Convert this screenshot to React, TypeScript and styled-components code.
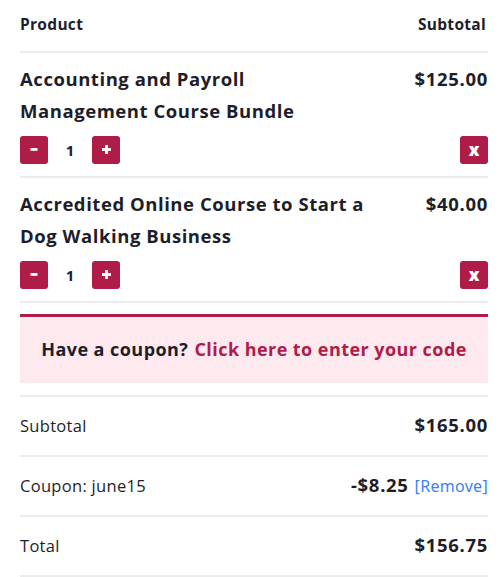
import React from "react";
import styled, { createGlobalStyle } from "styled-components";

const Global = createGlobalStyle`
  html, body { margin: 0; padding: 0; background: #fff; }
  body { font-family: "Open Sans", "Noto Sans", sans-serif; color: #1e1e2a; }
  * { box-sizing: border-box; }
`;

const CRIMSON = "#b01c48";
const LINE = "#ececec";

const Page = styled.div`
  padding: 0 12px 0 20px;
  width: 500px;
`;

const HeaderRow = styled.div`
  display: flex;
  justify-content: space-between;
  align-items: center;
  height: 53px;
  padding: 2px 2px 6px 0;
  font-size: 15.5px;
  font-weight: 700;
  letter-spacing: 0.3px;
  border-bottom: 2px solid ${LINE};
`;

const Item = styled.div`
  display: grid;
  grid-template-columns: 358px 1fr;
  padding: 10px 0 12px;
  border-bottom: 2px solid ${LINE};
`;

const Title = styled.div`
  font-size: 18.5px;
  font-weight: 700;
  line-height: 32px;
  letter-spacing: 0.55px;
`;

const Price = styled.div`
  font-family: "Noto Sans", "Open Sans", sans-serif;
  font-size: 18.5px;
  font-weight: 700;
  line-height: 32px;
  letter-spacing: 0.7px;
  text-align: right;
`;

const Controls = styled.div`
  display: flex;
  align-items: center;
  margin-top: 9px;
`;

const SqButton = styled.button`
  width: 28px;
  height: 28px;
  border: 0;
  border-radius: 3px;
  background: ${CRIMSON};
  color: #fff;
  font-family: "Open Sans", sans-serif;
  font-weight: 800;
  font-size: 17px;
  padding: 0 0 2px;
  display: flex;
  align-items: center;
  justify-content: center;
`;

const Qty = styled.span`
  width: 44px;
  text-align: center;
  font-size: 15px;
  font-weight: 700;
`;

const RemoveCell = styled.div`
  display: flex;
  align-items: flex-end;
  justify-content: flex-end;
`;

const Coupon = styled.div`
  margin: 11px 0 12px;
  border-top: 3px solid ${CRIMSON};
  background: #fde9ee;
  height: 69px;
  display: flex;
  align-items: center;
  justify-content: center;
  font-size: 18px;
  font-weight: 700;
  letter-spacing: 0.45px;
  padding-bottom: 2px;
`;

const CouponLink = styled.a`
  color: ${CRIMSON};
  text-decoration: none;
  margin-left: 6px;
`;

const Totals = styled.div`
  border-top: 2px solid ${LINE};
`;

const TotalRow = styled.div`
  display: flex;
  justify-content: space-between;
  align-items: center;
  height: 60px;
  border-bottom: 2px solid ${LINE};
  padding-bottom: 2px;
`;

const Label = styled.span`
  font-size: 16.5px;
  letter-spacing: 0.3px;
`;

const Amount = styled.span`
  display: flex;
  align-items: baseline;
`;

const RemoveLink = styled.a`
  font-family: "Noto Sans", "Open Sans", sans-serif;
  font-weight: 400;
  font-size: 16px;
  letter-spacing: 0.3px;
  color: #3b82f6;
  margin-left: 6px;
  text-decoration: none;
`;

const Minus = () => (
  <svg width="10" height="10" viewBox="0 0 10 10"><rect x="1.5" y="4" width="7" height="2.8" fill="#fff" /></svg>
);
const Plus = () => (
  <svg width="11" height="11" viewBox="0 0 11 11"><rect x="1" y="4.1" width="9" height="2.8" fill="#fff" /><rect x="4.1" y="1" width="2.8" height="9" fill="#fff" /></svg>
);

const items = [
  { title: "Accounting and Payroll Management Course Bundle", price: "$125.00" },
  { title: "Accredited Online Course to Start a Dog Walking Business", price: "$40.00" },
];

export default function App() {
  return (
    <Page>
      <Global />
      <HeaderRow>
        <span>Product</span>
        <span>Subtotal</span>
      </HeaderRow>
      {items.map((it) => (
        <Item key={it.title}>
          <Title>{it.title}</Title>
          <Price>{it.price}</Price>
          <Controls>
            <SqButton aria-label="decrease"><Minus /></SqButton>
            <Qty>1</Qty>
            <SqButton aria-label="increase"><Plus /></SqButton>
          </Controls>
          <RemoveCell>
            <SqButton aria-label="remove">x</SqButton>
          </RemoveCell>
        </Item>
      ))}
      <Coupon>
        Have a coupon?<CouponLink href="#">Click here to enter your code</CouponLink>
      </Coupon>
      <Totals>
        <TotalRow>
          <Label>Subtotal</Label>
          <Price>$165.00</Price>
        </TotalRow>
        <TotalRow>
          <Label>Coupon: june15</Label>
          <Amount>
            <Price as="span">-$8.25</Price>
            <RemoveLink href="#">[Remove]</RemoveLink>
          </Amount>
        </TotalRow>
        <TotalRow>
          <Label>Total</Label>
          <Price>$156.75</Price>
        </TotalRow>
      </Totals>
    </Page>
  );
}
